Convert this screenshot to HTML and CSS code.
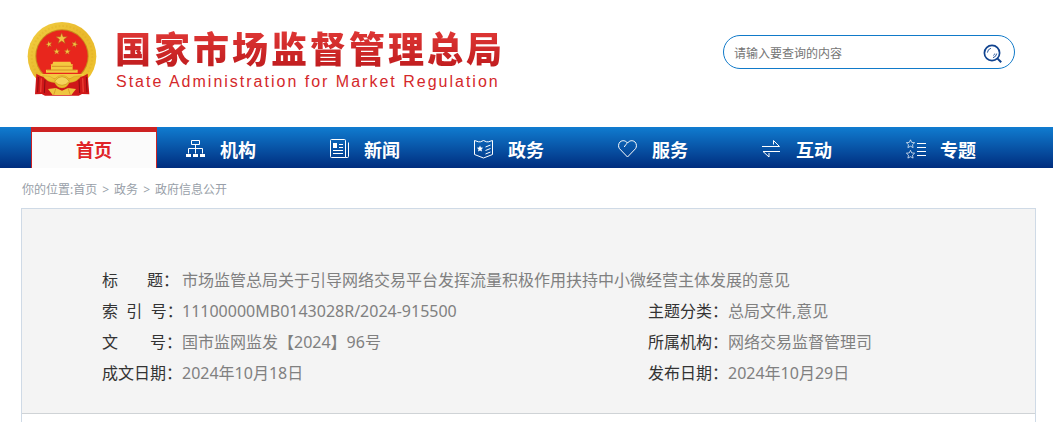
FILE: index.html
```html
<!DOCTYPE html>
<html lang="zh-CN">
<head>
    <meta charset="UTF-8">
    <title>国家市场监督管理总局</title>
    <link rel="stylesheet" href="styles.css">
</head>
<body>
    <div class="header">
        <a href="#" class="logo">
            <svg class="emblem" viewBox="21 19 210 222" width="70" height="74">
                <defs>
                    <linearGradient id="gold" x1="0" y1="0" x2="1" y2="1">
                        <stop offset="0" stop-color="#f2d044"/>
                        <stop offset=".5" stop-color="#e9b92c"/>
                        <stop offset="1" stop-color="#f0c530"/>
                    </linearGradient>
                    <path id="star" d="M0-10 2.4-3.2 9.5-3.1 3.8 1.2 5.9 8.1 0 4-5.9 8.1-3.8 1.2-9.5-3.1-2.4-3.2z"/>
                </defs>
                <circle cx="126" cy="122" r="103" fill="url(#gold)"/>
                <circle cx="126" cy="122" r="91" fill="none" stroke="#d9a522" stroke-width="6" stroke-dasharray="5 6" opacity=".3"/>
                <circle cx="126" cy="121" r="80" fill="#c98a1b"/>
                <circle cx="126" cy="121" r="77" fill="#e8261d"/>
                <g fill="#f3c343" stroke="#b85518" stroke-width="1">
                    <use href="#star" transform="translate(125 69) scale(1.8)"/>
                    <use href="#star" transform="translate(87 86) rotate(-15)"/>
                    <use href="#star" transform="translate(164 86) rotate(15)"/>
                    <use href="#star" transform="translate(110 108)"/>
                    <use href="#star" transform="translate(142 108)"/>
                </g>
                <!-- 天安门 -->
                <path fill="#f4c840" d="M100 138h51l3 8h5l-2 6H94l-2-6h5zM93 152h65v10h15v9H78v-9h15zM60 175h132l-10 14H70z"/>
                <path d="M96 152h60M81 163h88" stroke="#c67618" stroke-width="2"/>
                <!-- 红绸 -->
                <path fill="#cf1719" d="M49 174q12 9 30 12l47 22 47-22q18-3 30-12l5 62-22-1-10 5H75l-10-5-20 1z"/>
                <path d="M55 184l-2 46M75 192l-2 40M199 184l2 46M177 192l2 40" stroke="#8e0b10" stroke-width="3"/>
                <path d="M64 188l-2 42M188 188l2 42" stroke="#ef4034" stroke-width="4"/>
                <path fill="url(#gold)" stroke="#c88c1c" stroke-width="1" d="M68 180q24-1 36 10 9-11 22-11t22 11q12-11 36-10-10 18-36 21-8 16-22 16t-22-16q-26-3-36-21z"/>
                <path d="M104 197q9-14 22-14t22 14q-9 12-22 12t-22-12z" fill="#f5d45a" stroke="#cb8e1c" stroke-width="2"/>
                <path d="M84 220l24-3 18 8 18-8 24 3-14 18h-56z" fill="#efc540"/>
                <path d="M108 217l-7 21M144 217l7 21" stroke="#d08c20" stroke-width="2"/>
            </svg>
            <span class="logo-text">
                <strong>国家市场监督管理总局</strong>
                <em>State Administration for Market Regulation</em>
            </span>
        </a>
        <form class="search" action="#">
            <input type="text" class="search-input" placeholder="请输入要查询的内容" aria-label="请输入要查询的内容">
            <button type="submit" class="search-btn" aria-label="搜索">
                <svg viewBox="0 0 20 20" width="20" height="20" fill="none" stroke="#10438f">
                    <circle cx="9" cy="9" r="7.6" stroke-width="1.7"/>
                    <path d="M14.6 14.6l3.6 3.6" stroke-width="2"/>
                    <path d="M4.4 8.6q.3-3.4 3.5-4.3M13.7 9.6q-.5 3.3-3.7 4.1M11.7 9.6q-.3 1.3-1.3 1.9" stroke-width=".9"/>
                </svg>
            </button>
        </form>
    </div>

    <ul class="nav">
        <li class="active"><a href="#">首页</a></li>
        <li><a href="#">
            <svg viewBox="0 0 20 20" width="20" height="20">
                <path d="M5.5 1.5h8v4h-8zM9.5 5.5v9M2.5 14.500v-5h14v5"/>
                <path class="fill" d="M0 15h5v3H0zM7 15h5v3H7zM14 15h5v3h-5z"/>
            </svg>机构</a></li>
        <li><a href="#">
            <svg viewBox="0 0 20 20" width="20" height="20">
                <path d="M.5 1.500q0-1 1-1h13q1 0 1 1v17h-14q-1 0-1-1zM18.500 3.500v14q0 1-1 1h-2M9 5.500h4M9 8.500h4M3 11.500h10M3 14.500h10"/>
                <path class="fill" d="M3 4h4v5H3z"/>
            </svg>新闻</a></li>
        <li><a href="#">
            <svg viewBox="0 0 20 20" width="20" height="20">
                <path d="M.5 1.500l4 1.300h2l3-1.300 3 1.300h2l4-1.300v14l-9 3.500-9-3.500zM11.500 8l5-2M11.500 11.500l5-2M11.500 15l5-2"/>
                <path class="fill" d="M6 6.500l.9 2.100 2.300.2-1.700 1.500.5 2.300-2-1.200-2 1.200.5-2.300-1.700-1.500 2.300-.2z"/>
            </svg>政务</a></li>
        <li><a href="#">
            <svg viewBox="0 0 20 20" width="20" height="20">
                <path d="M9.500 18l-8-8.300C.1 7.900.3 4.600 2 3c2.200-2 5.500-1.700 7.500 1 2-2.700 5.300-3 7.500-1 1.700 1.600 1.900 4.900.5 6.700zM9.500 4q-2 1.300-3.200 4"/>
            </svg>服务</a></li>
        <li><a href="#">
            <svg viewBox="0 0 20 20" width="20" height="20">
                <path d="M0 7.500h17.500l-6-6v4M18 12.500H1l6 5.500v-4"/>
            </svg>互动</a></li>
        <li><a href="#">
            <svg viewBox="0 0 20 20" width="20" height="20">
                <path d="M11 4.500h9M11 8.500h9M11 12.500h9M11 16.500h9"/>
                <path class="thin" d="M4.500.8l1.200 2.600 2.900.3-2.100 2 .6 2.900-2.600-1.400-2.600 1.400.6-2.900-2.100-2 2.900-.3zM4.500 11.300l1.200 2.600 2.900.3-2.100 2 .6 2.900-2.600-1.400-2.600 1.400.6-2.900-2.100-2 2.900-.3z"/>
            </svg>专题</a></li>
    </ul>

    <div class="wrap">
        <p class="crumb">你的位置:<a href="#">首页</a><span>&gt;</span><a href="#">政务</a><span>&gt;</span><a href="#">政府信息公开</a></p>
        <div class="content">
            <dl class="info">
                <div class="row full">
                    <dt>标&nbsp;&nbsp;&nbsp;&nbsp;&nbsp;&nbsp;&nbsp;题：</dt>
                    <dd>市场监管总局关于引导网络交易平台发挥流量积极作用扶持中小微经营主体发展的意见</dd>
                </div>
                <div class="row">
                    <dt>索&nbsp;&nbsp;引&nbsp;&nbsp;号：</dt>
                    <dd>11100000MB0143028R/2024-915500</dd>
                </div>
                <div class="row">
                    <dt>主题分类：</dt>
                    <dd>总局文件,意见</dd>
                </div>
                <div class="row">
                    <dt>文&emsp;&emsp;号：</dt>
                    <dd>国市监网监发【2024】96号</dd>
                </div>
                <div class="row">
                    <dt>所属机构：</dt>
                    <dd>网络交易监督管理司</dd>
                </div>
                <div class="row">
                    <dt>成文日期：</dt>
                    <dd>2024年10月18日</dd>
                </div>
                <div class="row">
                    <dt>发布日期：</dt>
                    <dd>2024年10月29日</dd>
                </div>
            </dl>
        </div>
    </div>
</body>
</html>
```
FILE: styles.css
```css
body{font-family:"Noto Sans","Noto Sans CJK SC",sans-serif;background-color:#ffffff;}
body,dl,dd,p{margin:0;}
ul,li{margin:0;padding:0;list-style:none;}
a{text-decoration:none;color:inherit;}
input,button{outline:none;font-family:inherit;}
svg{display:block;}
html, body{
    height: 100%;
}
body{
    display: flex;
    flex-direction: column;
}

.header{
    display: flex;
    justify-content: space-between;
    align-items: flex-start;
    padding: 22px 38px 31px 27px;
}
.logo{
    display: flex;
    gap: 18px;
    color: #d4282a;
}
.logo-text{
    display: flex;
    flex-direction: column;
    gap: 4px;
    padding-top: 4px;
    white-space: nowrap;
}
.logo-text strong{
    font-family: "Noto Sans CJK SC", sans-serif;
    font-size: 36px;
    font-weight: 900;
    line-height: 42px;
    letter-spacing: 3px;
    background: linear-gradient(#e23a38, #c01c1e);
    -webkit-background-clip: text;
    background-clip: text;
    color: transparent;
}
.logo-text em{
    padding-left: 1px;
    font-family: "Liberation Sans", sans-serif;
    font-size: 16px;
    font-style: normal;
    line-height: 20px;
    letter-spacing: 2px;
}

.search{
    display: flex;
    align-items: center;
    width: 292px;
    height: 34px;
    margin-top: 13px;
    padding: 2px 11px 0 10px;
    border: 1px solid #117ac9;
    border-radius: 17px;
    box-sizing: border-box;
}
.search-input{
    flex: 1;
    min-width: 0;
    padding: 0;
    border: none;
    background: none;
    font-size: 12px;
}
.search-input::placeholder{
    color: #757575;
}
.search-btn{
    padding: 2px 0 0;
    border: none;
    background: none;
    cursor: pointer;
}

.nav{
    display: flex;
    height: 41px;
    padding-left: 31px;
    background: linear-gradient(#107cd0, #002d7e);
    color: #ffffff;
    font-size: 18px;
    font-weight: bold;
}
.nav li{
    width: 144px;
}
.nav a{
    display: flex;
    align-items: center;
    gap: 14px;
    height: 100%;
    padding: 3px 0 0 29px;
    box-sizing: border-box;
}
.nav svg{
    fill: none;
    stroke: #ffffff;
    stroke-width: 1;
}
.nav .fill{
    fill: #ffffff;
    stroke: none;
}
.nav .thin{
    stroke-width: .7;
}
.nav .active{
    width: 126px;
    border: 1px solid #cd2222;
    border-top-width: 5px;
    border-bottom: none;
    background-color: #fbfbfb;
    color: #e02428;
    box-sizing: border-box;
}
.nav .active a{
    justify-content: center;
    padding: 0 0 3px;
}

.wrap{
    display: flex;
    flex: 1;
    flex-direction: column;
    padding: 0 17px 0 21px;
}
.crumb{
    padding: 4px 0 0 1px;
    color: #999fa9;
    font-size: 12px;
    line-height: 36px;
}
.crumb span{
    padding: 0 5px;
}

.content{
    flex: 1;
    border: 1px solid #cfdae6;
    border-bottom: none;
}
.info{
    display: grid;
    grid-template-columns: 546fr 387fr;
    padding: 56px 0 24px 80px;
    border-bottom: 1px solid #cfd3d6;
    background-color: #f4f4f4;
    font-size: 16px;
    line-height: 31px;
}
.info .row{
    display: flex;
}
.info .full{
    grid-column: 1 / 3;
}
.info dt{
    flex: none;
    width: 80px;
    color: #333333;
    white-space: nowrap;
}
.info dd{
    color: #808080;
}
```
